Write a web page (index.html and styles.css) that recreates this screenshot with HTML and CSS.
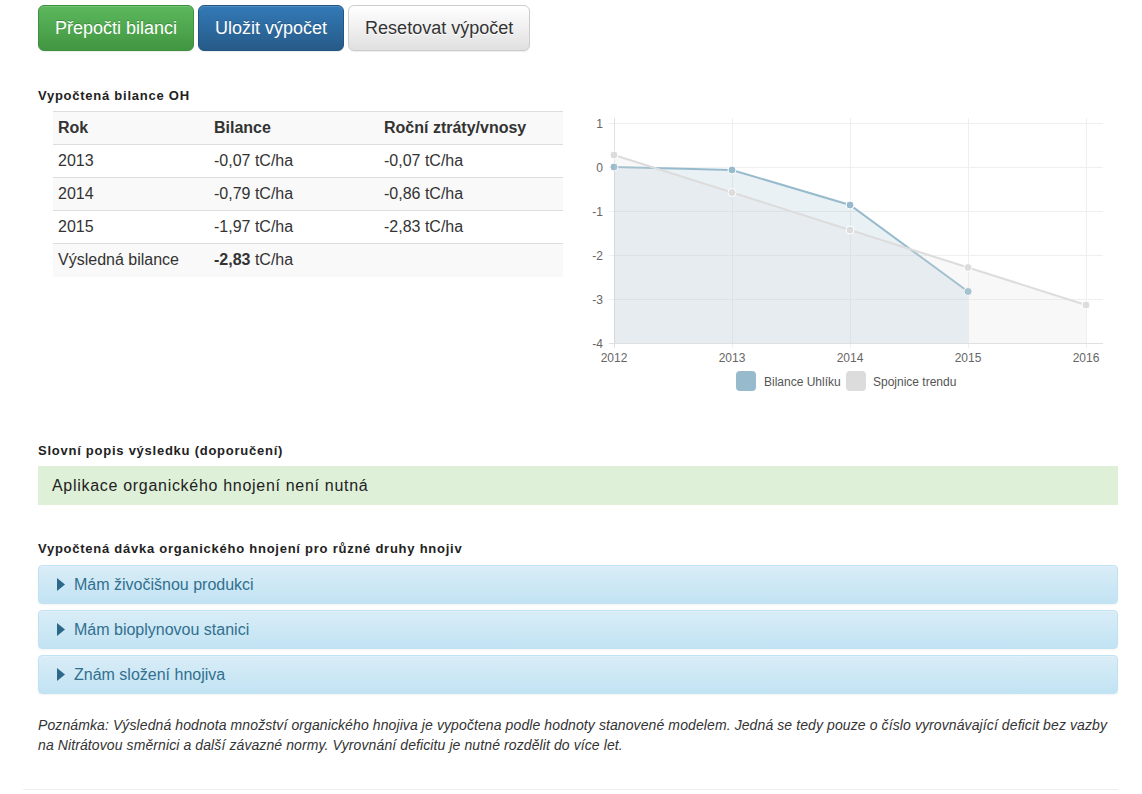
FILE: index.html
```html
<!DOCTYPE html>
<html lang="cs">
<head>
<meta charset="utf-8">
<title>Bilance OH</title>
<link rel="stylesheet" href="styles.css">
</head>
<body>
<div class="page">
  <div class="actions">
    <button class="btn btn-success">Přepočti bilanci</button>
    <button class="btn btn-primary">Uložit výpočet</button>
    <button class="btn btn-default">Resetovat výpočet</button>
  </div>

  <div class="result-row">
    <div class="result-table">
      <h4 class="section-title">Vypočtená bilance OH</h4>
      <table class="bal">
        <thead>
          <tr><th class="c1">Rok</th><th class="c2">Bilance</th><th class="c3">Roční ztráty/vnosy</th></tr>
        </thead>
        <tbody>
          <tr><td>2013</td><td>-0,07 tC/ha</td><td>-0,07 tC/ha</td></tr>
          <tr class="alt"><td>2014</td><td>-0,79 tC/ha</td><td>-0,86 tC/ha</td></tr>
          <tr><td>2015</td><td>-1,97 tC/ha</td><td>-2,83 tC/ha</td></tr>
          <tr class="alt"><td>Výsledná bilance</td><td><strong>-2,83</strong> tC/ha</td><td></td></tr>
        </tbody>
      </table>
    </div>
    <div class="result-chart">
      <svg class="chart" width="548" height="310" viewBox="570 88 548 310" xmlns="http://www.w3.org/2000/svg">
        <g class="grid" stroke="#efefef" stroke-width="1">
          <line x1="609" y1="123.5" x2="1103" y2="123.5"/>
          <line x1="609" y1="167.5" x2="1103" y2="167.5"/>
          <line x1="609" y1="211.5" x2="1103" y2="211.5"/>
          <line x1="609" y1="255.5" x2="1103" y2="255.5"/>
          <line x1="609" y1="299.5" x2="1103" y2="299.5"/>
          <line x1="732.5" y1="118" x2="732.5" y2="348"/>
          <line x1="850.5" y1="118" x2="850.5" y2="348"/>
          <line x1="968.5" y1="118" x2="968.5" y2="348"/>
          <line x1="1086.5" y1="118" x2="1086.5" y2="348"/>
        </g>
        <g stroke="#e0e0e0" stroke-width="1">
          <line x1="609" y1="343.5" x2="1103" y2="343.5"/>
          <line x1="614.5" y1="118" x2="614.5" y2="348"/>
        </g>
        <g class="ylab" font-size="12" fill="#666" text-anchor="end">
          <text x="603" y="127.5">1</text>
          <text x="603" y="171.5">0</text>
          <text x="603" y="215.5">-1</text>
          <text x="603" y="259.5">-2</text>
          <text x="603" y="303.5">-3</text>
          <text x="603" y="347.5">-4</text>
        </g>
        <g class="xlab" font-size="12" fill="#666" text-anchor="middle">
          <text x="614" y="361.5">2012</text>
          <text x="732" y="361.5">2013</text>
          <text x="850" y="361.5">2014</text>
          <text x="968" y="361.5">2015</text>
          <text x="1086" y="361.5">2016</text>
        </g>
        <!-- Bilance Uhlíku -->
        <polygon points="614,167 732,170 850,205 968,291.5 968,343 614,343" fill="rgba(151,187,205,0.2)"/>
        <polyline points="614,167 732,170 850,205 968,291.5" fill="none" stroke="#97bbcd" stroke-width="2"/>
        <g fill="#97bbcd" stroke="#fff" stroke-width="1">
          <circle cx="614" cy="167" r="4"/>
          <circle cx="732" cy="170" r="4"/>
          <circle cx="850" cy="205" r="4"/>
          <circle cx="968" cy="291.5" r="4"/>
        </g>
        <!-- Spojnice trendu -->
        <polygon points="614,155 732,192.5 850,230 968,267.5 1086,305 1086,343 614,343" fill="rgba(220,220,220,0.2)"/>
        <polyline points="614,155 732,192.5 850,230 968,267.5 1086,305" fill="none" stroke="#dcdcdc" stroke-width="2"/>
        <g fill="#dcdcdc" stroke="#fff" stroke-width="1">
          <circle cx="614" cy="155" r="4"/>
          <circle cx="732" cy="192.5" r="4"/>
          <circle cx="850" cy="230" r="4"/>
          <circle cx="968" cy="267.5" r="4"/>
          <circle cx="1086" cy="305" r="4"/>
        </g>
        <!-- legend -->
        <rect x="736" y="371" width="20" height="20" rx="4" fill="#97bbcd"/>
        <text x="764" y="385.5" font-size="12" fill="#555">Bilance Uhlíku</text>
        <rect x="846" y="371" width="20" height="20" rx="4" fill="#dcdcdc"/>
        <text x="873" y="385.5" font-size="12" fill="#555">Spojnice trendu</text>
      </svg>
    </div>
  </div>

  <h4 class="section-title desc-title">Slovní popis výsledku (doporučení)</h4>
  <div class="alert-success">Aplikace organického hnojení není nutná</div>

  <h4 class="section-title dose-title">Vypočtená dávka organického hnojení pro různé druhy hnojiv</h4>
  <div class="panels">
    <div class="panel-head"><svg class="caret" width="8" height="13" viewBox="0 0 8 13"><polygon points="0,0 8,6.5 0,13" fill="#2c6889"/></svg><span>Mám živočišnou produkci</span></div>
    <div class="panel-head"><svg class="caret" width="8" height="13" viewBox="0 0 8 13"><polygon points="0,0 8,6.5 0,13" fill="#2c6889"/></svg><span>Mám bioplynovou stanici</span></div>
    <div class="panel-head"><svg class="caret" width="8" height="13" viewBox="0 0 8 13"><polygon points="0,0 8,6.5 0,13" fill="#2c6889"/></svg><span>Znám složení hnojiva</span></div>
  </div>

  <p class="note">Poznámka: Výsledná hodnota množství organického hnojiva je vypočtena podle hodnoty stanovené modelem. Jedná se tedy pouze o číslo vyrovnávající deficit bez vazby na Nitrátovou směrnici a další závazné normy. Vyrovnání deficitu je nutné rozdělit do více let.</p>

  <hr class="rule">
</div>
</body>
</html>
```

FILE: styles.css
```css
* { box-sizing: border-box; }

html, body {
  margin: 0;
  padding: 0;
  background: #fff;
}

body {
  font-family: "Liberation Sans", Arial, Helvetica, sans-serif;
  font-size: 14px;
  line-height: 1.42857;
  color: #333;
}

.page {
  width: 1142px;
  padding: 5px 24px 0 38px;
}

.actions {
  display: flex;
  gap: 4px;
}

.btn {
  font-family: "Liberation Sans", Arial, Helvetica, sans-serif;
  font-size: 18px;
  line-height: 24px;
  padding: 10px 16px;
  border-radius: 6px;
  border: 1px solid transparent;
  cursor: pointer;
  box-shadow: inset 0 1px 0 rgba(255,255,255,.15), 0 1px 1px rgba(0,0,0,.075);
}

.btn-success {
  color: #fff;
  background: linear-gradient(to bottom, #5cb85c 0, #419641 100%);
  border-color: #3e8f3e;
  text-shadow: 0 -1px 0 rgba(0,0,0,.2);
}

.btn-primary {
  color: #fff;
  background: linear-gradient(to bottom, #337ab7 0, #265a88 100%);
  border-color: #245580;
  text-shadow: 0 -1px 0 rgba(0,0,0,.2);
}

.btn-default {
  color: #333;
  background: linear-gradient(to bottom, #fff 0, #e0e0e0 100%);
  border-color: #ccc;
  text-shadow: 0 1px 0 #fff;
}

.result-row {
  display: flex;
  gap: 7px;
  margin-top: 37px;
}

.result-table {
  width: 525px;
}

.result-chart {
  flex: 1;
}

.chart {
  display: block;
  font-family: "Liberation Sans", Arial, Helvetica, sans-serif;
}

.section-title {
  margin: 0;
  font-size: 13px;
  line-height: 16px;
  font-weight: bold;
  letter-spacing: 0.75px;
  color: #222;
}

.bal {
  margin: 7px 0 0 15px;
  width: 510px;
  border-collapse: collapse;
  font-size: 16px;
  line-height: 22px;
}

.bal th, .bal td {
  padding: 5px;
  height: 33px;
  text-align: left;
  border-top: 1px solid #ddd;
  vertical-align: top;
}

.bal thead tr { background: #f9f9f9; }
.bal th { font-weight: bold; border-bottom: 1px solid #ddd; }
.bal tr.alt { background: #f9f9f9; }
.bal td strong { font-weight: bold; }

.c1 { width: 156px; }
.c2 { width: 170px; }

.desc-title {
  margin-top: 45px;
}

.alert-success {
  margin-top: 7px;
  background: #dff0d8;
  border: 1px solid #dff0d8;
  padding: 8px 13px;
  font-size: 16px;
  line-height: 21px;
  letter-spacing: 0.7px;
  color: #222;
}

.dose-title {
  margin-top: 36px;
}

.panels {
  margin-top: 8px;
  display: flex;
  flex-direction: column;
  gap: 6px;
}

.panel-head {
  display: flex;
  align-items: center;
  gap: 9px;
  height: 39px;
  padding: 0 15px 0 18px;
  border: 1px solid #bfe3f2;
  border-radius: 4px;
  background: linear-gradient(to bottom, #d9edf7 0, #c2e3f3 100%);
  box-shadow: inset 0 1px 0 rgba(255,255,255,.25), 0 1px 2px rgba(0,0,0,.05);
  color: #31708f;
  font-size: 16px;
  line-height: 21px;
}

.caret { flex: none; }

.note {
  margin: 21px 0 0;
  font-size: 14px;
  line-height: 20px;
  font-style: italic;
  letter-spacing: 0.1px;
  color: #333;
}

.rule {
  margin: 34px 0 0 -15px;
  border: 0;
  border-top: 1px solid #eee;
}
```
